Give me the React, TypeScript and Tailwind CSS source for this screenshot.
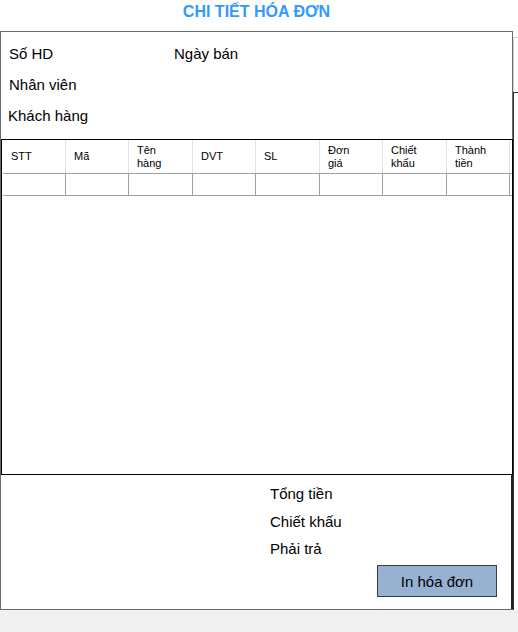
const COLUMNS = [
  { label: "STT", w: "w-[63px]" },
  { label: "Mã", w: "w-[63px]" },
  { label: "Tên hàng", w: "w-[64px]" },
  { label: "DVT", w: "w-[63px]" },
  { label: "SL", w: "w-[64px]" },
  { label: "Đơn giá", w: "w-[63px]" },
  { label: "Chiết khấu", w: "w-[64px]" },
  { label: "Thành tiền", w: "w-[63px]" },
];

function InvoiceGrid() {
  return (
    <div className="h-[336px] border border-black bg-white pl-[1px]">
      {/* Header */}
      <div className="flex h-[34px] border-b border-[#a0a0a0]">
        {COLUMNS.map((col) => (
          <div
            key={col.label}
            className={`${col.w} flex items-center border-r border-[#e3e3e3] px-[8px] text-[11px] leading-[13px]`}
          >
            <span className="max-w-[34px]">{col.label}</span>
          </div>
        ))}
      </div>
      {/* Empty row */}
      <div className="flex h-[22px] border-b border-[#a0a0a0]">
        {COLUMNS.map((col) => (
          <div key={col.label} className={`${col.w} border-r border-[#a0a0a0]`} />
        ))}
      </div>
    </div>
  );
}

export default function App() {
  return (
    <div
      className="flex h-[632px] w-[518px] flex-col bg-[#f0f0f0] text-black"
      style={{ fontFamily: '"Liberation Sans", Arial, sans-serif' }}
    >
      <div className="flex h-[610px] bg-white">
        {/* Main column */}
        <div className="flex w-[513px] flex-col">
          {/* Title */}
          <div className="flex h-[31px] items-center justify-center pb-[7px] text-[16px] font-bold text-[#3399ff]">
            CHI TIẾT HÓA ĐƠN
          </div>

          <div className="flex flex-1 flex-col border-b border-l border-[#6b6b6b]">
            {/* Info box */}
            <div className="flex h-[108px] flex-col gap-[14px] border-r border-t border-[#6b6b6b] pl-[7px] pt-[13px] text-[15px] leading-[17px]">
              <div className="flex">
                <span className="w-[166px] pl-[1px]">Số HD</span>
                <span>Ngày bán</span>
              </div>
              <div className="pl-[1px]">Nhân viên</div>
              <div>Khách hàng</div>
            </div>

            {/* Grid */}
            <InvoiceGrid />

            {/* Totals */}
            <div className="flex flex-1 flex-col border-r-2 border-[#222] pt-[10px] text-[15px] leading-[17px]">
              <div className="flex flex-col gap-[10.5px] pl-[269px]">
                <span>Tổng tiền</span>
                <span>Chiết khấu</span>
                <span>Phải trả</span>
              </div>
              <div className="mt-[8px] flex justify-end pr-[14px]">
                <button className="flex h-[32px] w-[120px] items-center justify-center border border-[#2e3d50] bg-[#97b1d1] text-[15px]">
                  In hóa đơn
                </button>
              </div>
            </div>
          </div>
        </div>

        {/* Right edge strip */}
        <div className="flex flex-1 flex-col pt-[37px]">
          <div className="h-[55px] border-l border-t border-[#d4d4d4]" />
          <div className="flex-1 border-l border-t border-[#333]" />
        </div>
      </div>
    </div>
  );
}
